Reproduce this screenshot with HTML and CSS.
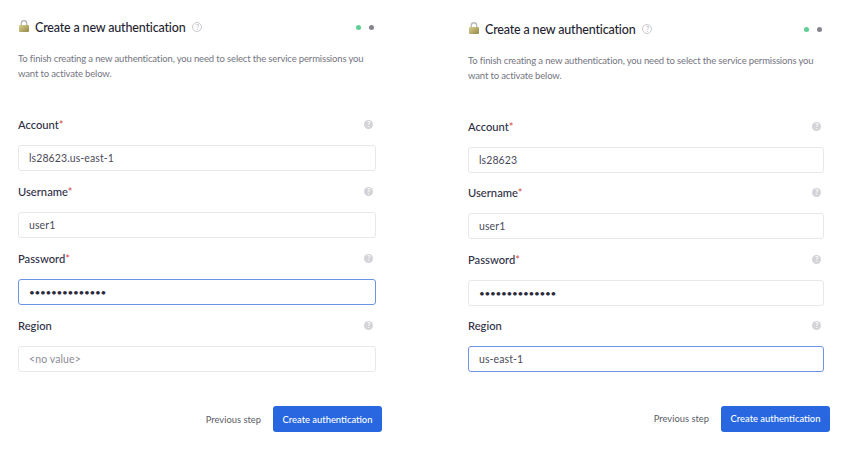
FILE: index.html
```html
<!DOCTYPE html>
<html lang="en">
<head>
    <meta charset="UTF-8">
    <title>Create a new authentication</title>
    <link rel="stylesheet" href="styles.css">
</head>
<body>
    <div class="page">
        <!-- Left step: password focused -->
        <section class="panel panel-left">
            <div class="panel-head">
                <svg class="lock" width="10" height="12" viewBox="0 0 10 12"><defs><linearGradient id="lockGold" x1="0" y1="0" x2="1" y2="1"><stop offset="0" stop-color="#d8cf8c"/><stop offset="1" stop-color="#94884a"/></linearGradient></defs><path d="M2.300 6V3.500a2.700 2.700 0 0 1 5.400 0V6" fill="none" stroke="#b9b9b6" stroke-width="1.400"/><rect x="0" y="5" width="10" height="7" rx="1" fill="url(#lockGold)"/></svg>
                <h1>Create a new authentication</h1>
                <span class="hint-outline">?</span>
                <div class="steps"><span class="dot dot-done"></span><span class="dot"></span></div>
            </div>
            <p class="intro">To finish creating a new authentication, you need to select the service permissions you want to activate below.</p>
            <div class="fields">
                <div class="field">
                    <div class="field-label"><label>Account<span class="req">*</span></label><span class="hint">?</span></div>
                    <div class="input">ls28623.us-east-1</div>
                </div>
                <div class="field">
                    <div class="field-label"><label>Username<span class="req">*</span></label><span class="hint">?</span></div>
                    <div class="input">user1</div>
                </div>
                <div class="field">
                    <div class="field-label"><label>Password<span class="req">*</span></label><span class="hint">?</span></div>
                    <div class="input input-focus input-secret">••••••••••••••</div>
                </div>
                <div class="field">
                    <div class="field-label"><label>Region</label><span class="hint">?</span></div>
                    <div class="input input-empty">&lt;no value&gt;</div>
                </div>
            </div>
            <div class="actions">
                <a class="prev">Previous step</a>
                <button class="primary">Create authentication</button>
            </div>
        </section>

        <!-- Right step: region focused -->
        <section class="panel panel-right">
            <div class="panel-head">
                <svg class="lock" width="10" height="12" viewBox="0 0 10 12"><path d="M2.300 6V3.500a2.700 2.700 0 0 1 5.400 0V6" fill="none" stroke="#b9b9b6" stroke-width="1.400"/><rect x="0" y="5" width="10" height="7" rx="1" fill="url(#lockGold)"/></svg>
                <h1>Create a new authentication</h1>
                <span class="hint-outline">?</span>
                <div class="steps"><span class="dot dot-done"></span><span class="dot"></span></div>
            </div>
            <p class="intro">To finish creating a new authentication, you need to select the service permissions you want to activate below.</p>
            <div class="fields">
                <div class="field">
                    <div class="field-label"><label>Account<span class="req">*</span></label><span class="hint">?</span></div>
                    <div class="input">ls28623</div>
                </div>
                <div class="field">
                    <div class="field-label"><label>Username<span class="req">*</span></label><span class="hint">?</span></div>
                    <div class="input">user1</div>
                </div>
                <div class="field">
                    <div class="field-label"><label>Password<span class="req">*</span></label><span class="hint">?</span></div>
                    <div class="input input-secret">••••••••••••••</div>
                </div>
                <div class="field">
                    <div class="field-label"><label>Region</label><span class="hint">?</span></div>
                    <div class="input input-focus">us-east-1</div>
                </div>
            </div>
            <div class="actions">
                <a class="prev">Previous step</a>
                <button class="primary">Create authentication</button>
            </div>
        </section>
    </div>
</body>
</html>
```

FILE: styles.css
```css
html, body {
    margin: 0;
    padding: 0;
    background: #fff;
}

body {
    font-family: Lato, "Open Sans", sans-serif;
    color: #23233a;
    overflow: hidden;
}

.page {
    display: grid;
    grid-template-columns: 358px 356px;
    column-gap: 92px;
    padding-left: 18px;
}

.panel-left {
    padding-top: 18px;
}

.panel-right {
    padding-top: 20px;
}

.panel-head {
    display: flex;
    align-items: center;
    height: 18px;
}

.lock {
    margin-left: 1px;
    margin-right: 6px;
    margin-top: -3px;
}

h1 {
    margin: 1px 7px 0 0;
    font-size: 12.500px;
    font-weight: 500;
    line-height: 18px;
    letter-spacing: -0.17px;
    color: #1f1f33;
}

.hint-outline {
    width: 8px;
    height: 8px;
    border: 1px solid #c9c9d0;
    border-radius: 50%;
    color: #b5b5bd;
    font-size: 7px;
    line-height: 8px;
    text-align: center;
}

.steps {
    display: flex;
    gap: 8px;
    margin-left: auto;
    margin-right: 2px;
}

.dot {
    width: 5px;
    height: 5px;
    border-radius: 50%;
    background: #84848f;
}

.dot-done {
    background: #5fcf94;
}

.intro {
    margin: 15px 0 0;
    font-size: 9.500px;
    line-height: 15px;
    letter-spacing: -0.15px;
    color: #75757f;
}

.fields {
    display: flex;
    flex-direction: column;
    gap: 11px;
    margin-top: 34px;
}

.panel-right .fields {
    gap: 10.330px;
}

.field-label {
    display: flex;
    justify-content: space-between;
    align-items: center;
    height: 19px;
    margin-bottom: 11px;
}

label {
    font-size: 11.200px;
    font-weight: 500;
    color: #2e2e45;
}

.req {
    color: #d9534f;
}

.hint {
    width: 9px;
    height: 9px;
    margin-right: 3px;
    border-radius: 50%;
    background: #d3d3d8;
    color: #fff;
    font-size: 7px;
    font-weight: 700;
    line-height: 9px;
    text-align: center;
}

.input {
    box-sizing: border-box;
    height: 26px;
    padding: 0 10px;
    border: 1px solid #e8e8ec;
    border-radius: 3px;
    font-size: 10.500px;
    line-height: 24px;
    letter-spacing: 0.1px;
    color: #4a4a5a;
}

.input-focus {
    border-color: #6d94e4;
}

.input-secret {
    color: #2a2a3a;
    font-size: 10px;
    letter-spacing: -0.3px;
}

.input-empty {
    color: #8c8c96;
}

.actions {
    display: flex;
    justify-content: flex-end;
    align-items: center;
    gap: 12px;
    height: 26px;
    margin-top: 34px;
    margin-right: -6px;
}

.prev {
    font-size: 9.400px;
    color: #5c5c68;
}

.primary {
    width: 109px;
    height: 26px;
    padding: 0;
    border: none;
    border-radius: 3px;
    background: #2867df;
    color: #fff;
    font-family: inherit;
    font-size: 9.400px;
    font-weight: 500;
}
```
